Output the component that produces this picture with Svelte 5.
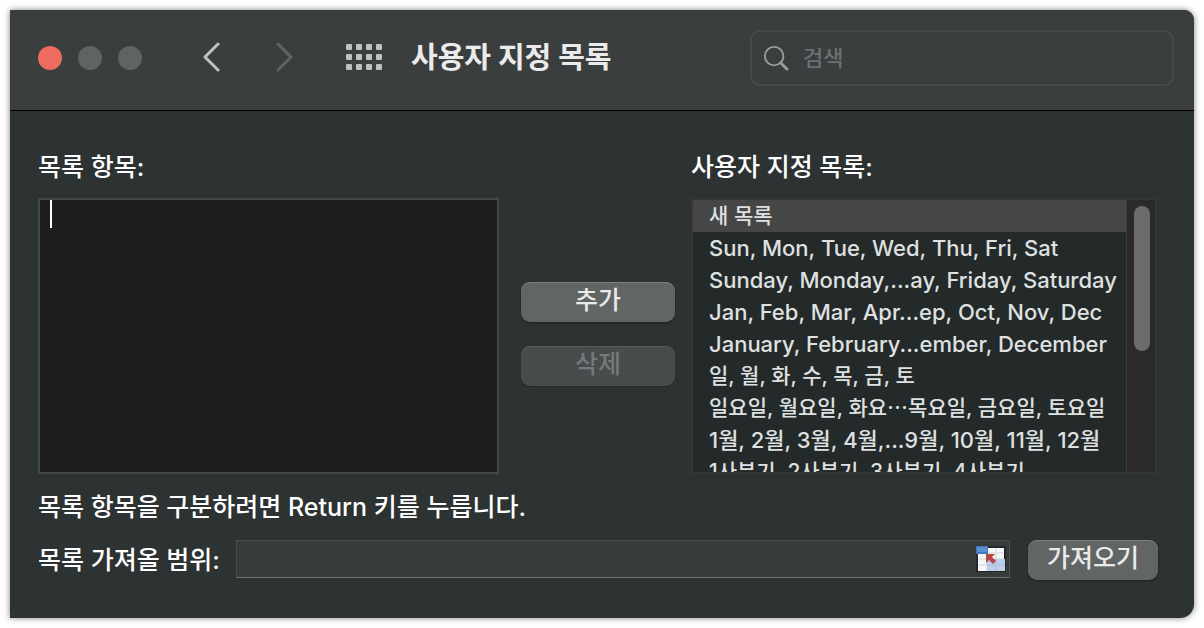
<script>
	let items = "";
	let search = "";
	let range = "";
	let selected = 0;
	let scrollTop = 0;

	const lists = [
		{ name: "새 목록", font: "hangul" },
		{ name: "Sun, Mon, Tue, Wed, Thu, Fri, Sat", font: "latin" },
		{ name: "Sunday, Monday,...ay, Friday, Saturday", font: "latin" },
		{ name: "Jan, Feb, Mar, Apr...ep, Oct, Nov, Dec", font: "latin" },
		{ name: "January, February...ember, December", font: "latin" },
		{ name: "일, 월, 화, 수, 목, 금, 토", font: "hangul" },
		{ name: "일요일, 월요일, 화요⋯목요일, 금요일, 토요일", font: "hangul" },
		{ name: "1월, 2월, 3월, 4월,...9월, 10월, 11월, 12월", font: "mixed" },
		{ name: "1사분기, 2사분기, 3사분기, 4사분기", font: "hangul" },
	];

	const dots = [0, 10, 20].flatMap((y) => [0, 10, 20, 30].map((x) => ({ x, y })));
</script>

<main class="window">
	<header>
		<div class="lights">
			<button class="light close" aria-label="닫기"></button>
			<button class="light" aria-label="최소화" disabled></button>
			<button class="light" aria-label="확대" disabled></button>
		</div>
		<nav>
			<button class="icon" aria-label="뒤로">
				<svg width="20" height="32" viewBox="0 0 20 32">
					<path d="M17 2 L4 15 L17 28" />
				</svg>
			</button>
			<button class="icon dim" aria-label="앞으로" disabled>
				<svg width="20" height="32" viewBox="0 0 20 32">
					<path d="M3 2 L16 15 L3 28" />
				</svg>
			</button>
		</nav>
		<button class="icon all" aria-label="모두 보기">
			<svg width="36" height="28" viewBox="0 0 36 28">
				{#each dots as dot}
					<rect x={dot.x} y={dot.y} width="6" height="6" rx="1" />
				{/each}
			</svg>
		</button>
		<h1>사용자 지정 목록</h1>
		<label class="search">
			<svg width="26" height="26" viewBox="0 0 28 28">
				<circle cx="12" cy="12" r="10" />
				<path d="M19 19 L26 26" />
			</svg>
			<input type="search" placeholder="검색" aria-label="검색" bind:value={search} />
		</label>
	</header>

	<section class="content">
		<div class="columns">
			<div class="entries">
				<label for="items">목록 항목:</label>
				<div class="editor">
					<textarea id="items" bind:value={items}></textarea>
					{#if !items}<span class="caret"></span>{/if}
				</div>
			</div>
			<div class="actions">
				<button class="push">추가</button>
				<button class="push" disabled>삭제</button>
			</div>
			<div class="lists">
				<label for="lists">사용자 지정 목록:</label>
				<div class="listbox">
					<select
						id="lists"
						size="9"
						bind:value={selected}
						on:scroll={(e) => (scrollTop = e.currentTarget.scrollTop)}
					>
						{#each lists as list, i}
							<option value={i} class={list.font}>{list.name}</option>
						{/each}
					</select>
					<div class="track">
						<div class="thumb" style="margin-top: {scrollTop}px"></div>
					</div>
				</div>
			</div>
		</div>

		<p>목록 항목을 구분하려면 Return 키를 누릅니다.</p>

		<div class="import">
			<label for="range">목록 가져올 범위:</label>
			<div class="range">
				<input id="range" type="text" bind:value={range} />
				<button class="picker" aria-label="범위 선택">
					<svg width="32" height="28" viewBox="0 0 32 28">
						<rect x="1" y="1" width="30" height="26" fill="#222829" />
						<rect x="3" y="3" width="26" height="23" fill="#f6f6f8" />
						<path d="M3 14 H29 M3 20 H29 M12 8 H29 M12 3 V26 M21 3 V26" stroke="#d3d5d8" />
						<rect x="12" y="14" width="18" height="12" fill="#bdd0ea" />
						<path d="M12 20 H30 M21 14 V26" stroke="#a8c0e0" />
						<rect x="1" y="1" width="12" height="8" fill="#4377bd" />
						<rect x="2" y="2" width="10" height="5" fill="#5d8fd0" />
						<path d="M11 9 L20 9 L17 12 L21 16 L18 19 L14 15 L11 18 Z" fill="#b94745" />
					</svg>
				</button>
			</div>
			<button class="push">가져오기</button>
		</div>
	</section>
</main>

<style>
	:global(body) {
		background: #fff;
	}
	* {
		box-sizing: border-box;
	}
	.window {
		margin: 10px;
		background: #2d3232;
		color: #fff;
		font-family: Inter, "Noto Sans CJK KR", sans-serif;
		font-size: 25px;
		font-weight: 500;
		line-height: 32px;
		border-radius: 0 10px 14px 0;
		box-shadow: 0 0 6px rgba(0, 0, 0, 0.5);
		overflow: hidden;
	}
	button,
	input,
	select,
	textarea {
		font: inherit;
		color: inherit;
		margin: 0;
		padding: 0;
		border: 0;
		outline: 0;
		background: none;
	}
	svg {
		display: block;
	}
	header {
		display: flex;
		align-items: center;
		height: 101px;
		padding: 0 20px 5px 28px;
		background: #3b3e3f;
		border-bottom: 1px solid #000;
	}
	.lights {
		display: flex;
		gap: 16px;
	}
	.light {
		width: 24px;
		height: 24px;
		border-radius: 50%;
		background: #5f6364;
	}
	.close {
		background: #ed6b5f;
	}
	nav {
		display: flex;
		gap: 54px;
		margin-left: 59px;
	}
	.icon path {
		fill: none;
		stroke: #bfc1c1;
		stroke-width: 3;
		stroke-linecap: round;
		stroke-linejoin: round;
	}
	.icon.dim path {
		stroke: #606364;
	}
	.all {
		margin-left: 51px;
	}
	.all rect {
		fill: #bfc1c1;
	}
	h1 {
		flex: 1;
		margin: 0 0 0 29px;
		font-size: 29px;
		font-weight: 700;
		color: #ebebeb;
	}
	.search {
		flex: 0 1 424px;
		display: flex;
		align-items: center;
		gap: 14px;
		height: 56px;
		padding: 0 11px;
		border: 2px solid #474a4b;
		border-radius: 10px;
	}
	.search svg {
		flex: none;
		fill: none;
		stroke: #9b9d9e;
		stroke-width: 2;
		stroke-linecap: round;
	}
	.search path {
		stroke-width: 3;
	}
	.search input {
		flex: 1;
		min-width: 0;
		font-size: 22px;
	}
	.search input::placeholder {
		color: #6d7071;
	}
	.content {
		padding: 40px 36px 38px 28px;
	}
	.columns {
		display: flex;
		margin-right: 1px;
	}
	.entries {
		flex: 1;
	}
	.lists {
		width: 466px;
	}
	.entries label,
	.lists label {
		display: block;
		margin-bottom: 15px;
	}
	.editor {
		position: relative;
		height: 276px;
	}
	textarea {
		display: block;
		width: 100%;
		height: 100%;
		padding: 0 10px;
		resize: none;
		background: #1e1e1e;
		border: 2px solid #434848;
	}
	.caret {
		position: absolute;
		top: 2px;
		left: 12px;
		width: 2px;
		height: 28px;
		background: #fff;
	}
	.actions {
		display: flex;
		flex-direction: column;
		gap: 24px;
		width: 154px;
		margin: 131px 16px 0 22px;
	}
	.push {
		height: 40px;
		padding: 0 0 4px;
		border-radius: 9px;
		background: #616564;
		color: #e9eaea;
		box-shadow: inset 0 1px #7d8180, 0 1px 2px rgba(0, 0, 0, 0.4);
	}
	.push:disabled {
		background: #474c4c;
		color: #757979;
		box-shadow: inset 0 1px #575b5b, 0 1px 1px rgba(0, 0, 0, 0.2);
	}
	.listbox {
		display: flex;
		height: 276px;
		border: 2px solid #343737;
		background: #242929;
	}
	select {
		flex: 1;
		min-width: 0;
		height: 272px;
		font-size: 22px;
		overflow-y: auto;
		scrollbar-width: none;
	}
	option {
		display: flex;
		align-items: center;
		height: 32px;
		min-height: 32px;
		padding: 0 0 4px 16px;
		font-weight: 500;
		color: #dfe0e0;
	}
	option.latin {
		padding-bottom: 0;
		font-weight: 450;
	}
	option.hangul {
		font-size: 21px;
	}
	option:checked {
		background: #464646 linear-gradient(#464646, #464646);
		color: #dfe0e0;
	}
	.track {
		width: 29px;
		padding: 6px 5px 0 7px;
		background: #2a2a2a;
		border-left: 1px solid #3a3c3c;
	}
	.thumb {
		width: 16px;
		height: 145px;
		border-radius: 8px;
		background: #6b6b6b;
	}
	p {
		margin: 17px 0;
	}
	.import {
		display: flex;
		align-items: flex-start;
	}
	.import label {
		align-self: center;
	}
	.range {
		flex: 1;
		display: flex;
		align-items: center;
		height: 38px;
		margin: 0 18px 0 16px;
		padding-right: 2px;
		background: #373b3b;
		border: 1px solid #484d4d;
		border-bottom: 1px solid #6b7070;
	}
	.range input {
		flex: 1;
		min-width: 0;
		padding: 0 8px;
	}
	.import .push {
		width: 130px;
	}
</style>
